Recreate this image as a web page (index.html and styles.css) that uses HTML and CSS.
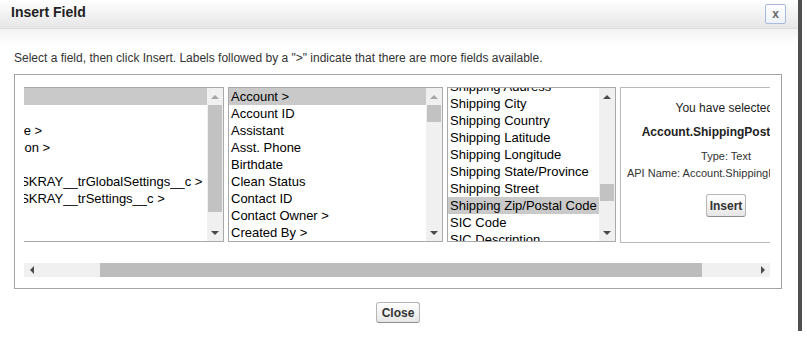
FILE: index.html
```html
<!doctype html>
<html lang="en">
<head>
    <meta charset="utf-8">
    <meta name="viewport" content="width=device-width, initial-scale=1">
    <title>Insert Field</title>
    <link rel="stylesheet" href="styles.css">
</head>
<body>
<div class="page">
    <div class="dialog">
        <div class="dialog-head">
            <h2>Insert Field</h2>
            <button class="close-x" title="Close">x</button>
        </div>

        <div class="dialog-body">
            <p class="hint">Select a field, then click Insert. Labels followed by a "&gt;" indicate that there are more fields available.</p>

            <div class="picker">
                <div class="viewport" id="viewport">
                    <div class="columns">
                        <div class="list objects">
                            <div class="items">
                                <div class="opt sel">Contact &gt;</div>
                                <div class="opt">$Api &gt;</div>
                                <div class="opt">$ObjectType &gt;</div>
                                <div class="opt">$Organization &gt;</div>
                                <div class="opt">$Profile &gt;</div>
                                <div class="opt">$Setup.TRSKRAY__trGlobalSettings__c &gt;</div>
                                <div class="opt">$Setup.TRSKRAY__trSettings__c &gt;</div>
                                <div class="opt">$System &gt;</div>
                                <div class="opt">$User &gt;</div>
                                <div class="opt">$UserRole &gt;</div>
                            </div>
                            <div class="vbar">
                                <span class="arrow up off"></span>
                                <span class="track"><span class="thumb" style="height: 107px"></span></span>
                                <span class="arrow down"></span>
                            </div>
                        </div>

                        <div class="list fields">
                            <div class="items">
                                <div class="opt sel">Account &gt;</div>
                                <div class="opt">Account ID</div>
                                <div class="opt">Assistant</div>
                                <div class="opt">Asst. Phone</div>
                                <div class="opt">Birthdate</div>
                                <div class="opt">Clean Status</div>
                                <div class="opt">Contact ID</div>
                                <div class="opt">Contact Owner &gt;</div>
                                <div class="opt">Created By &gt;</div>
                                <div class="opt">Created Date</div>
                                <div class="opt">Data.com Key</div>
                                <div class="opt">Deleted</div>
                                <div class="opt">Department</div>
                                <div class="opt">Description</div>
                                <div class="opt">Do Not Call</div>
                                <div class="opt">Email</div>
                                <div class="opt">Email Opt Out</div>
                                <div class="opt">Fax</div>
                                <div class="opt">Fax Opt Out</div>
                                <div class="opt">First Name</div>
                                <div class="opt">Full Name</div>
                                <div class="opt">Home Phone</div>
                            </div>
                            <div class="vbar">
                                <span class="arrow up off"></span>
                                <span class="track"><span class="thumb" style="height: 17px"></span></span>
                                <span class="arrow down"></span>
                            </div>
                        </div>

                        <div class="list sub">
                            <div class="items" id="sub-items">
                                <div class="opt">Account Fax</div>
                                <div class="opt">Account ID</div>
                                <div class="opt">Account Name</div>
                                <div class="opt">Account Number</div>
                                <div class="opt">Account Owner &gt;</div>
                                <div class="opt">Account Phone</div>
                                <div class="opt">Account Rating</div>
                                <div class="opt">Account Site</div>
                                <div class="opt">Account Source</div>
                                <div class="opt">Account Type</div>
                                <div class="opt">Annual Revenue</div>
                                <div class="opt">Billing Address</div>
                                <div class="opt">Billing City</div>
                                <div class="opt">Billing Country</div>
                                <div class="opt">Billing Street</div>
                                <div class="opt">Created By &gt;</div>
                                <div class="opt">Created Date</div>
                                <div class="opt">Description</div>
                                <div class="opt">Employees</div>
                                <div class="opt">Industry</div>
                                <div class="opt">Last Modified Date</div>
                                <div class="opt">Ownership</div>
                                <div class="opt">Parent Account &gt;</div>
                                <div class="opt">Shipping Address</div>
                                <div class="opt">Shipping City</div>
                                <div class="opt">Shipping Country</div>
                                <div class="opt">Shipping Latitude</div>
                                <div class="opt">Shipping Longitude</div>
                                <div class="opt">Shipping State/Province</div>
                                <div class="opt">Shipping Street</div>
                                <div class="opt sel">Shipping Zip/Postal Code</div>
                                <div class="opt">SIC Code</div>
                                <div class="opt">SIC Description</div>
                                <div class="opt">Ticker Symbol</div>
                                <div class="opt">Website</div>
                                <div class="opt">Year Started</div>
                            </div>
                            <div class="vbar">
                                <span class="arrow up"></span>
                                <span class="track"><span class="thumb" style="height: 17px; margin-top: 79px"></span></span>
                                <span class="arrow down"></span>
                            </div>
                        </div>

                        <div class="preview">
                            <p class="sel-label">You have selected:</p>
                            <p class="sel-name">Account.ShippingPostalCode</p>
                            <p class="sel-meta">Type: Text</p>
                            <p class="sel-meta api">API Name: Account.ShippingPostalCode</p>
                            <button class="btn">Insert</button>
                        </div>
                    </div>
                </div>

                <div class="hbar">
                    <span class="arrow left"></span>
                    <span class="track"><span class="thumb" style="margin-left: 61px; width: 602px"></span></span>
                    <span class="arrow right"></span>
                </div>
            </div>

            <div class="actions">
                <button class="btn btn-close">Close</button>
            </div>
        </div>
    </div>
    <div class="edge"></div>
</div>

<script>
    document.getElementById('viewport').scrollLeft = 69;
    const sub = document.getElementById('sub-items');
    sub.scrollTop = sub.querySelector('.sel').offsetTop - 109;
</script>
</body>
</html>
```

FILE: styles.css
```css
body {
    margin: 0;
    font-family: "Liberation Sans", Arial, Helvetica, sans-serif;
    color: #000;
    background: #fff;
}
p { margin: 0; }

.page { display: flex; align-items: flex-start; }
.dialog { width: 798px; }
.edge { width: 4px; height: 331px; background: #4f4f4f; }

/* header */
.dialog-head {
    display: flex;
    align-items: flex-start;
    justify-content: space-between;
    height: 29px;
    box-sizing: border-box;
    padding: 4px 12px 0 11px;
    background: linear-gradient(#ffffff, #e6e6e6);
    border-bottom: 1px solid #dedede;
}
.dialog-head h2 {
    margin: 0;
    font-size: 14px;
    line-height: 17px;
    font-weight: bold;
    color: #222;
}
.close-x {
    width: 21px; height: 20px;
    padding: 0;
    border: 1px solid #a9b9de; border-radius: 2px;
    background: linear-gradient(#ffffff, #eef1f8);
    font-family: inherit;
    font-size: 12px;
    font-weight: bold;
    line-height: 16px;
    color: #666;
}

/* body */
.dialog-body {
    padding: 0 16px 0 14px;
    background: linear-gradient(#f2f2f2, #ffffff 16px);
}
.hint {
    padding: 22px 0 9px;
    font-size: 12px;
    line-height: 14px;
    color: #333;
}

.picker {
    border: 1px solid #a3a3a3;
    padding: 12px 11px 11px 9px;
}
.viewport { overflow: hidden; }
.columns {
    display: flex;
    gap: 4px;
    width: max-content;
}

/* select lists */
.list {
    display: flex;
    height: 155px;
    border: 1px solid #a9a9a9;
    box-sizing: border-box;
    font-size: 13px;
}
.list.objects { width: 269px; }
.list.fields { width: 215px; }
.list.sub { width: 169px; }
.items {
    position: relative;
    flex: 1;
    overflow: hidden;
}
.opt {
    height: 17px;
    line-height: 17px;
    padding-left: 2px;
    white-space: nowrap;
}
.opt.sel { background: #c9c9c9; }

.vbar {
    display: flex;
    flex-direction: column;
    width: 16px;
    background: #f0f0f0;
}
.vbar .track { flex: 1; display: flex; flex-direction: column; }
.vbar .thumb { margin: 0 1px; background: #c2c2c2; }
.vbar .arrow, .hbar .arrow {
    display: flex;
    align-items: center;
    justify-content: center;
}
.vbar .arrow { height: 17px; }
.arrow::after { content: ""; width: 0; height: 0; }
.arrow.up::after { border: 4px solid transparent; border-top: 0; border-bottom: 4px solid #4a4a4a; }
.arrow.down::after { border: 4px solid transparent; border-bottom: 0; border-top: 4px solid #4a4a4a; }
.arrow.up.off::after { border-bottom-color: #a6a6a6; }
.arrow.left::after { border: 4px solid transparent; border-left: 0; border-right: 4px solid #4a4a4a; }
.arrow.right::after { border: 4px solid transparent; border-right: 0; border-left: 4px solid #4a4a4a; }

/* selected field panel */
.preview {
    width: 212px;
    height: 156px;
    box-sizing: border-box;
    border: 1px solid #b9b9b9;
    text-align: center;
    color: #222;
}
.sel-label { margin-top: 12px; font-size: 12px; line-height: 16px; }
.sel-name { margin-top: 8px; font-size: 12px; line-height: 16px; font-weight: bold; }
.sel-meta { margin-top: 9px; font-size: 11px; line-height: 15px; color: #333; }
.sel-meta.api { margin-top: 2px; white-space: nowrap; }
.preview .btn { margin-top: 13px; height: 23px; padding: 0 3px; }

/* horizontal scrollbar */
.hbar {
    display: flex;
    height: 14px;
    margin-top: 20px;
    background: #f0f0f0;
}
.hbar .arrow { width: 15px; }
.hbar .track { flex: 1; display: flex; }
.hbar .thumb { background: #bcbcbc; }

/* buttons */
.btn {
    border: 1px solid #b5b5b5; border-bottom-color: #8c8c8c;
    border-radius: 3px;
    background: linear-gradient(#ffffff, #e6e6e6);
    font-family: inherit;
    font-size: 12px;
    font-weight: bold;
    color: #333;
}
.actions { padding-top: 13px; text-align: center; }
.btn-close { height: 21px; padding: 0 5px; }
```
